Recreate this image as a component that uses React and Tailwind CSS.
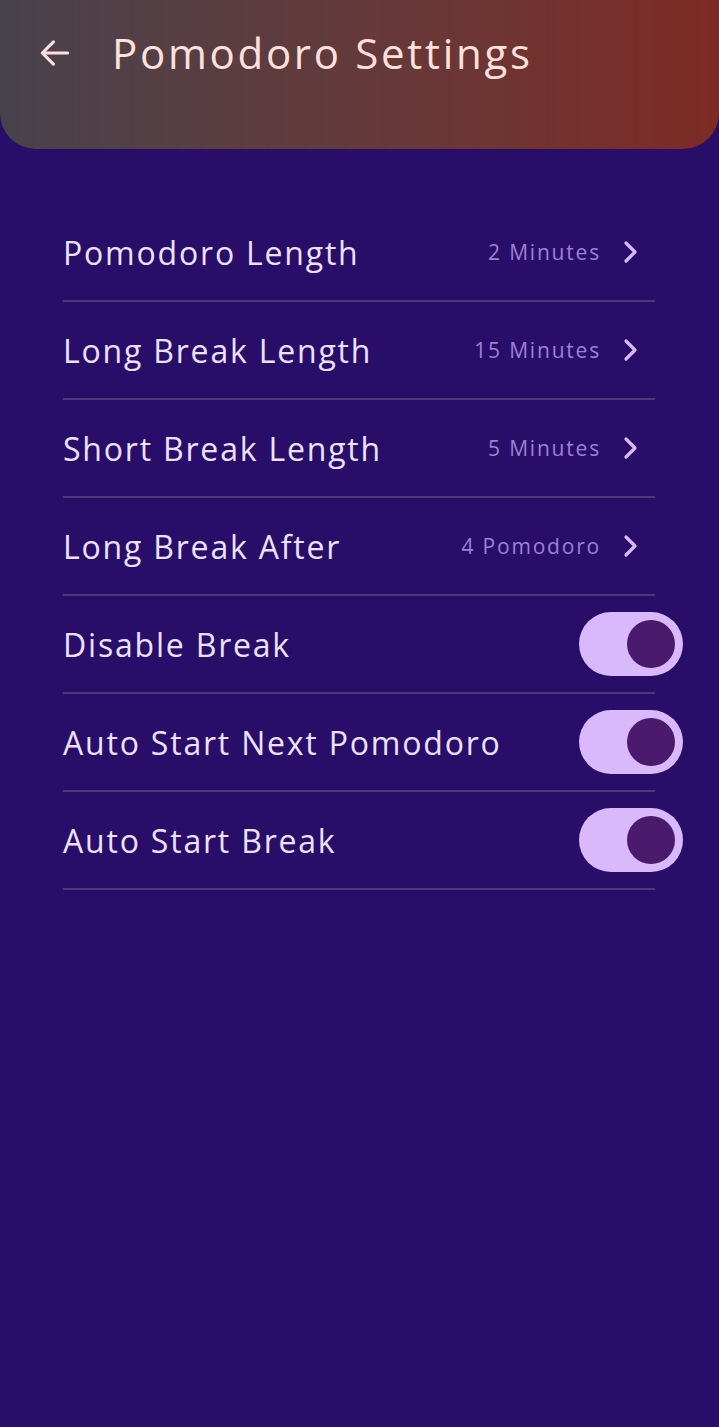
const rows = [
  { label: 'Pomodoro Length', value: '2 Minutes' },
  { label: 'Long Break Length', value: '15 Minutes' },
  { label: 'Short Break Length', value: '5 Minutes' },
  { label: 'Long Break After', value: '4 Pomodoro' },
  { label: 'Disable Break', toggle: true },
  { label: 'Auto Start Next Pomodoro', toggle: true },
  { label: 'Auto Start Break', toggle: true },
];

function Toggle() {
  return (
    <div className="w-[104px] h-[64px] rounded-full bg-[#d9b9fc] flex items-center justify-end pr-[8px]">
      <div className="w-[48px] h-[48px] rounded-full bg-[#4a1a6c]" />
    </div>
  );
}

function Chevron() {
  return (
    <svg width="20" height="24" viewBox="0 0 20 24" fill="none">
      <path d="M5 3l9 9-9 9" stroke="#d9b9fc" strokeWidth="3.2" strokeLinecap="round" strokeLinejoin="round" />
    </svg>
  );
}

export default function App() {
  return (
    <div className="min-h-[1427px] bg-[#280e68]" style={{ fontFamily: '"Open Sans", "Noto Sans", sans-serif' }}>
      <header className="h-[149px] rounded-b-[36px] bg-gradient-to-r from-[#47424c] to-[#7d2a24] flex items-start pt-[21px] pl-[36px]">
        <div className="flex items-center h-[64px]">
          <svg width="38" height="38" viewBox="0 0 24 24" fill="none" stroke="#ffe0dc" strokeWidth="2" strokeLinecap="round" strokeLinejoin="round">
            <path d="M20 12H4M11 5l-7 7 7 7" />
          </svg>
          <h1 className="ml-[38px] -mt-[2px] text-[42px] text-[#ffe0dc] font-medium tracking-[2.7px]">Pomodoro Settings</h1>
        </div>
      </header>

      <div className="mt-[55px] pl-[63px]">
        {rows.map((r) => (
          <div key={r.label} className="w-[592px]">
            <div className="h-[96px] flex items-center justify-between">
              <span className="text-[32px] text-[#ece2ff] font-medium tracking-[1.8px] mt-[2px]">{r.label}</span>
              {r.toggle ? (
                <div className="-mr-[28px]"><Toggle /></div>
              ) : (
                <div className="flex items-center gap-[20px] pr-[14px]">
                  <span className="text-[21px] text-[#9c80d4] font-medium tracking-[1.8px] mt-[1px]">{r.value}</span>
                  <Chevron />
                </div>
              )}
            </div>
            <div className="h-[2px] bg-[#4b3a7a]" />
          </div>
        ))}
      </div>
    </div>
  );
}
